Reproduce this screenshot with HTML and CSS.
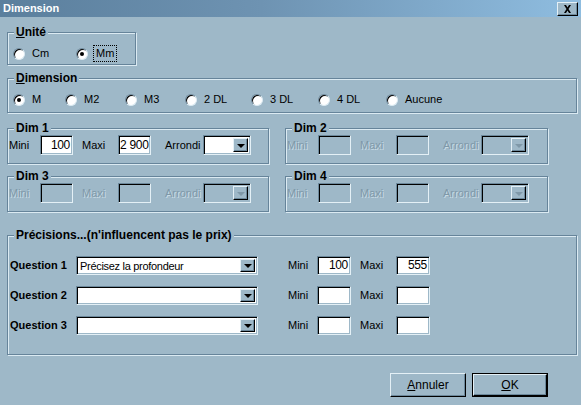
FILE: index.html
```html
<!DOCTYPE html>
<html lang="fr">
<head>
<meta charset="utf-8">
<title>Dimension</title>
<link rel="stylesheet" href="styles.css">
</head>
<body>
<div class="window">
  <div class="titlebar">
    <span class="title">Dimension</span>
    <span class="close"><svg width="9" height="8" viewBox="0 0 9 8"><path d="M1 0h2l1.5 2.5L6 0h2L5.5 4 8 8H6L4.5 5.5 3 8H1l2.5-4z" fill="#000"/></svg></span>
  </div>
  <div class="content">
    <div class="group g-unite">
      <span class="legend"><u>U</u>nité</span>
      <div class="radios r-unite">
        <span class="radio"><span class="dot"></span><span class="rlabel">Cm</span></span>
        <span class="radio checked"><span class="dot"></span><span class="rlabel focus">Mm</span></span>
      </div>
    </div>

    <div class="group g-dimension">
      <span class="legend"><u>D</u>imension</span>
      <div class="radios r-dim">
        <span class="radio checked"><span class="dot"></span><span class="rlabel">M</span></span>
        <span class="radio"><span class="dot"></span><span class="rlabel">M2</span></span>
        <span class="radio"><span class="dot"></span><span class="rlabel">M3</span></span>
        <span class="radio"><span class="dot"></span><span class="rlabel">2 DL</span></span>
        <span class="radio"><span class="dot"></span><span class="rlabel">3 DL</span></span>
        <span class="radio"><span class="dot"></span><span class="rlabel">4 DL</span></span>
        <span class="radio"><span class="dot"></span><span class="rlabel">Aucune</span></span>
      </div>
    </div>

    <div class="dims">
      <div class="group g-dim">
        <span class="legend">Dim 1</span>
        <div class="dimrow">
          <span class="lbl l-mini">Mini</span>
          <span class="field f-dim">100</span>
          <span class="lbl l-maxi">Maxi</span>
          <span class="field f-dim">2 900</span>
          <span class="lbl l-arr">Arrondi</span>
          <span class="combo c-dim"><span class="cval"></span><span class="cbtn"><span class="arrow"></span></span></span>
        </div>
      </div>
      <div class="group g-dim disabled">
        <span class="legend">Dim 2</span>
        <div class="dimrow">
          <span class="lbl l-mini">Mini</span>
          <span class="field f-dim"></span>
          <span class="lbl l-maxi">Maxi</span>
          <span class="field f-dim"></span>
          <span class="lbl l-arr">Arrondi</span>
          <span class="combo c-dim"><span class="cval"></span><span class="cbtn"><span class="arrow"></span></span></span>
        </div>
      </div>
      <div class="group g-dim disabled">
        <span class="legend">Dim 3</span>
        <div class="dimrow">
          <span class="lbl l-mini">Mini</span>
          <span class="field f-dim"></span>
          <span class="lbl l-maxi">Maxi</span>
          <span class="field f-dim"></span>
          <span class="lbl l-arr">Arrondi</span>
          <span class="combo c-dim"><span class="cval"></span><span class="cbtn"><span class="arrow"></span></span></span>
        </div>
      </div>
      <div class="group g-dim disabled">
        <span class="legend">Dim 4</span>
        <div class="dimrow">
          <span class="lbl l-mini">Mini</span>
          <span class="field f-dim"></span>
          <span class="lbl l-maxi">Maxi</span>
          <span class="field f-dim"></span>
          <span class="lbl l-arr">Arrondi</span>
          <span class="combo c-dim"><span class="cval"></span><span class="cbtn"><span class="arrow"></span></span></span>
        </div>
      </div>
    </div>

    <div class="group g-prec">
      <span class="legend">Précisions...(n'influencent pas le prix)</span>
      <div class="qrows">
        <div class="qrow">
          <span class="qlbl">Question 1</span>
          <span class="combo c-q"><span class="cval">Précisez la profondeur</span><span class="cbtn"><span class="arrow"></span></span></span>
          <span class="lbl q-mini">Mini</span>
          <span class="field f-q">100</span>
          <span class="lbl q-maxi">Maxi</span>
          <span class="field f-q">555</span>
        </div>
        <div class="qrow">
          <span class="qlbl">Question 2</span>
          <span class="combo c-q"><span class="cval"></span><span class="cbtn"><span class="arrow"></span></span></span>
          <span class="lbl q-mini">Mini</span>
          <span class="field f-q"></span>
          <span class="lbl q-maxi">Maxi</span>
          <span class="field f-q"></span>
        </div>
        <div class="qrow">
          <span class="qlbl">Question 3</span>
          <span class="combo c-q"><span class="cval"></span><span class="cbtn"><span class="arrow"></span></span></span>
          <span class="lbl q-mini">Mini</span>
          <span class="field f-q"></span>
          <span class="lbl q-maxi">Maxi</span>
          <span class="field f-q"></span>
        </div>
      </div>
    </div>

    <div class="buttons">
      <span class="btn"><u>A</u>nnuler</span>
      <span class="btn default"><span class="btn-inner"><u>O</u>K</span></span>
    </div>
  </div>
</div>
</body>
</html>
```

FILE: styles.css
```css
* { box-sizing: border-box; }

html, body {
  margin: 0;
  padding: 0;
}

body {
  width: 581px;
  height: 405px;
  overflow: hidden;
  background: #9eb8c8;
  font-family: "Liberation Sans", Arial, sans-serif;
  font-size: 11px;
  color: #000;
}

.window {
  width: 581px;
  height: 405px;
}

.titlebar {
  height: 17px;
  display: flex;
  align-items: center;
  justify-content: space-between;
  padding: 0 3px 0 3px;
  background: linear-gradient(to right, #5b7f9d 0%, #6e93b2 45%, #8fbde0 100%);
}

.title {
  color: #fff;
  font-weight: bold;
  font-size: 11px;
  line-height: 13px;
}

.close {
  width: 21px;
  height: 14px;
  display: flex;
  align-items: center;
  justify-content: center;
  background: #9eb8c8;
  border-top: 1px solid #e4f0f6;
  border-left: 1px solid #e4f0f6;
  border-right: 1px solid #000;
  border-bottom: 1px solid #000;
  box-shadow: inset -1px -1px 0 #6f8a9c;
}

.content {
  padding: 0 4px 0 7px;
}

/* Group boxes (etched) */
.group {
  position: relative;
  border: 1px solid #66849a;
  box-shadow: inset 1px 1px 0 #dbeaf2, 1px 1px 0 #dbeaf2;
}

.legend {
  position: absolute;
  top: -7px;
  left: 6px;
  padding: 0 2px 0 2px;
  background: #9eb8c8;
  font-weight: bold;
  font-size: 12px;
  line-height: 13px;
  white-space: nowrap;
}

.g-unite {
  margin-top: 15px;
  width: 129px;
  height: 33px;
}

.g-dimension {
  margin-top: 13px;
  width: 570px;
  height: 35px;
}

/* radios */
.radios {
  display: flex;
  align-items: center;
}

.r-unite {
  padding: 14px 0 0 5px;
}

.r-unite .radio:first-child { width: 63px; }

.r-dim {
  padding: 14px 0 0 5px;
  display: grid;
  grid-template-columns: 52px 60px 60px 66px 67px 68px auto;
}

.radio {
  display: flex;
  align-items: center;
  height: 13px;
}

.dot {
  position: relative;
  width: 12px;
  height: 12px;
  border-radius: 50%;
  background: #fff;
  flex: none;
  border: 1px solid;
  border-color: #6c889b #dbeaf2 #dbeaf2 #6c889b;
  box-shadow: inset 1px 1px 0 #000;
  margin-right: 7px;
}

.checked .dot::after {
  content: "";
  position: absolute;
  left: 3px;
  top: 3px;
  width: 4px;
  height: 4px;
  border-radius: 50%;
  background: #000;
}

.rlabel {
  line-height: 13px;
}

.focus {
  outline: 1px dotted #000;
  outline-offset: 1px;
  padding: 0 1px;
}

/* Dim boxes */
.dims {
  margin-top: 15px;
  display: grid;
  grid-template-columns: 262px 263px;
  column-gap: 16px;
  row-gap: 12px;
}

.g-dim {
  height: 36px;
}

.dimrow {
  display: flex;
  align-items: center;
  padding: 6px 0 0 1px;
}

.lbl { line-height: 13px; white-space: nowrap; }

.l-mini { width: 31px; }
.l-maxi { margin-left: 9px; width: 36px; }
.l-arr { margin-left: 14px; width: 38px; }

.field {
  display: block;
  flex: none;
  background: #fff;
  border: 1px solid;
  border-color: #6c889b #e4f0f6 #e4f0f6 #6c889b;
  box-shadow: inset 1px 1px 0 #000, inset -1px -1px 0 #9eb8c8;
  text-align: right;
  padding: 0 2px 0 1px;
  line-height: 16px;
  font-size: 12px;
  letter-spacing: -0.3px;
  white-space: nowrap;
}

.f-dim {
  width: 33px;
  height: 20px;
  padding-top: 1px;
}

.combo {
  display: flex;
  flex: none;
  background: #fff;
  border: 1px solid;
  border-color: #6c889b #e4f0f6 #e4f0f6 #6c889b;
  box-shadow: inset 1px 1px 0 #000, inset -1px -1px 0 #9eb8c8;
  padding: 2px 2px 2px 2px;
}

.c-dim {
  width: 48px;
  height: 20px;
}

.cval {
  flex: 1;
  line-height: 14px;
  font-size: 11px;
  letter-spacing: -0.3px;
  padding-left: 1px;
  white-space: nowrap;
  overflow: hidden;
}

.cbtn {
  width: 15px;
  flex: none;
  display: flex;
  align-items: center;
  justify-content: center;
  background: #9eb8c8;
  border-top: 1px solid #e4f0f6;
  border-left: 1px solid #e4f0f6;
  border-right: 1px solid #000;
  border-bottom: 1px solid #000;
  box-shadow: inset -1px -1px 0 #6c889b;
}

.arrow {
  width: 0;
  height: 0;
  border-left: 4px solid transparent;
  border-right: 4px solid transparent;
  border-top: 4px solid #000;
  margin-top: 1px;
}

/* disabled */
.disabled .lbl {
  color: #7f98a8;
  text-shadow: 1px 1px 0 #c9dce6;
}

.disabled .field,
.disabled .combo,
.disabled .cval {
  background: #9eb8c8;
}

.disabled .arrow {
  border-top-color: #7f98a8;
}

/* precisions */
.g-prec {
  margin-top: 23px;
  width: 570px;
  height: 120px;
}

.qrows {
  padding: 20px 0 0 2px;
  display: flex;
  flex-direction: column;
  gap: 11px;
}

.qrow {
  display: flex;
  align-items: center;
}

.qlbl {
  width: 66px;
  font-weight: bold;
  line-height: 13px;
  font-size: 11px;
  white-space: nowrap;
}

.c-q {
  width: 182px;
  height: 19px;
  padding: 2px;
}

.q-mini { margin-left: 30px; width: 29px; }
.q-maxi { margin-left: 9px; width: 36px; }

.f-q {
  width: 34px;
  height: 19px;
}

/* buttons */
.buttons {
  margin-top: 18px;
  display: flex;
  justify-content: flex-end;
  gap: 6px;
  padding-right: 29px;
}

.btn {
  width: 76px;
  height: 24px;
  display: flex;
  align-items: center;
  justify-content: center;
  background: #9eb8c8;
  border-top: 1px solid #e4f0f6;
  border-left: 1px solid #e4f0f6;
  border-right: 1px solid #000;
  border-bottom: 1px solid #000;
  box-shadow: inset -1px -1px 0 #6c889b;
  font-size: 12px;
}

.btn.default {
  border: 1px solid #000;
  box-shadow: none;
  padding: 0;
}

.btn-inner {
  width: 100%;
  height: 100%;
  display: flex;
  align-items: center;
  justify-content: center;
  border-top: 1px solid #e4f0f6;
  border-left: 1px solid #e4f0f6;
  border-right: 1px solid #000;
  border-bottom: 1px solid #000;
  box-shadow: inset -1px -1px 0 #6c889b;
}
```
